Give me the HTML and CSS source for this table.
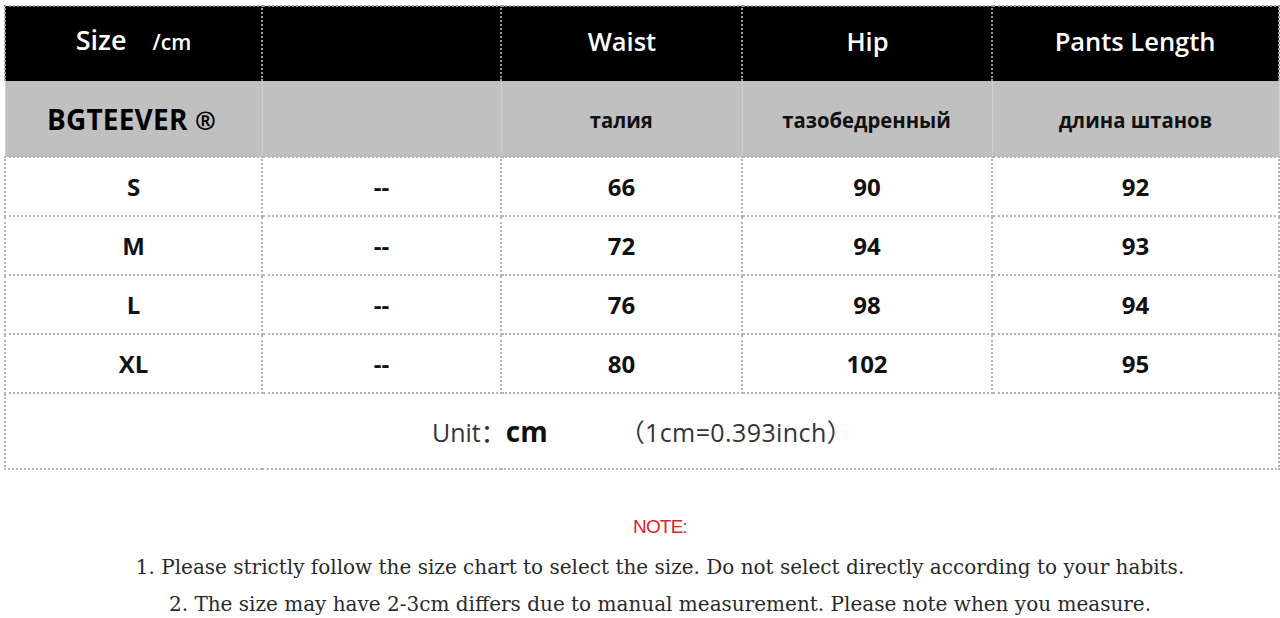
FILE: index.html
```html
<!DOCTYPE html>
<html lang="en">
<head>
<meta charset="utf-8">
<title>Size chart</title>
<link rel="stylesheet" href="styles.css">
</head>
<body>
<table class="chart">
  <colgroup>
    <col class="c1"><col class="c2"><col class="c3"><col class="c4"><col class="c5">
  </colgroup>
  <tr class="head">
    <td><span class="size">Size</span><span class="per">/cm</span></td>
    <td></td>
    <td><span class="cond">Waist</span></td>
    <td><span class="cond">Hip</span></td>
    <td><span class="cond">Pants Length</span></td>
  </tr>
  <tr class="sub">
    <td class="brand">BGTEEVER <span class="reg">®</span></td>
    <td></td>
    <td><span class="cyr">талия</span></td>
    <td><span class="cyr">тазобедренный</span></td>
    <td><span class="cyr">длина штанов</span></td>
  </tr>
  <tr class="data"><td>S</td><td>--</td><td>66</td><td>90</td><td>92</td></tr>
  <tr class="data"><td>M</td><td>--</td><td>72</td><td>94</td><td>93</td></tr>
  <tr class="data"><td>L</td><td>--</td><td>76</td><td>98</td><td>94</td></tr>
  <tr class="data"><td>XL</td><td>--</td><td>80</td><td>102</td><td>95</td></tr>
  <tr class="unit">
    <td colspan="5"><span class="ulabel">Unit：</span><span class="ucm">cm</span><span class="uconv">（1cm=0.393inch）</span></td>
  </tr>
</table>
<div class="notes">
  <p class="note-title">NOTE:</p>
  <p class="note-line">1. Please strictly follow the size chart to select the size. Do not select directly according to your habits.</p>
  <p class="note-line">2. The size may have 2-3cm differs due to manual measurement. Please note when you measure.</p>
</div>
</body>
</html>
```

FILE: styles.css
```css
html, body {
  margin: 0;
  padding: 0;
  background: #ffffff;
}

body {
  width: 1280px;
  height: 618px;
  overflow: hidden;
  font-family: "Open Sans", "Noto Sans", "Noto Sans CJK SC", sans-serif;
}

.chart {
  margin: 5px 0 0 4px;
  width: 1274px;
  border-collapse: collapse;
  table-layout: fixed;
}

.c1 { width: 257px; }
.c2 { width: 239px; }
.c3 { width: 241px; }
.c4 { width: 250px; }
.c5 { width: 287px; }

.chart td {
  border: 2px dotted #b4b4b4;
  text-align: center;
  vertical-align: middle;
  padding: 0;
}

.head td {
  background: #000;
  color: #fff;
  height: 68px;
  padding-bottom: 6px;
  font-size: 26px;
  font-weight: 600;
  border-color: #9a9a9a;
  border-bottom: 0;
  line-height: 30px;
}

.cond {
  display: inline-block;
  transform: scaleX(0.98);
}

.size {
  font-size: 27px;
  font-weight: 600;
}

.per {
  font-size: 21px;
  font-weight: 600;
  margin-left: 26px;
}

.sub td {
  background: #c0c0c0;
  height: 75px;
  border: 0;
  border-left: 1px solid #cfcfcf;
  border-right: 1px solid #cfcfcf;
  color: #111;
  font-size: 22px;
  font-weight: 700;
}

.sub td.brand {
  font-size: 28px;
  font-weight: 700;
  color: #000;
  padding-right: 4px;
  letter-spacing: 0.2px;
}

.reg {
  font-size: 25px;
}

.cyr {
  display: inline-block;
  transform: scaleX(0.92);
}

.data td {
  height: 57px;
  font-size: 24px;
  font-weight: 700;
  color: #111;
}

.unit td {
  height: 74px;
  font-size: 24px;
  color: #333;
}

.ulabel {
  font-weight: 400;
  font-size: 25px;
}

.ucm {
  font-weight: 700;
  font-size: 28px;
  color: #111;
}

.uconv {
  font-weight: 400;
  font-size: 25px;
  letter-spacing: 0.4px;
  margin-left: 72px;
}

.notes {
  margin-top: 46px;
  padding-left: 40px;
  text-align: center;
}

.notes p {
  margin: 0;
}

.note-title {
  color: #e0202a;
  font-size: 19px;
  font-family: "Liberation Sans", Arial, sans-serif;
  line-height: 22px;
  margin-bottom: 11px !important;
  letter-spacing: -0.8px;
}

.note-line {
  font-family: "DejaVu Serif", "Liberation Serif", serif;
  font-size: 20px;
  color: #2a2a2a;
  line-height: 37px;
}
```
